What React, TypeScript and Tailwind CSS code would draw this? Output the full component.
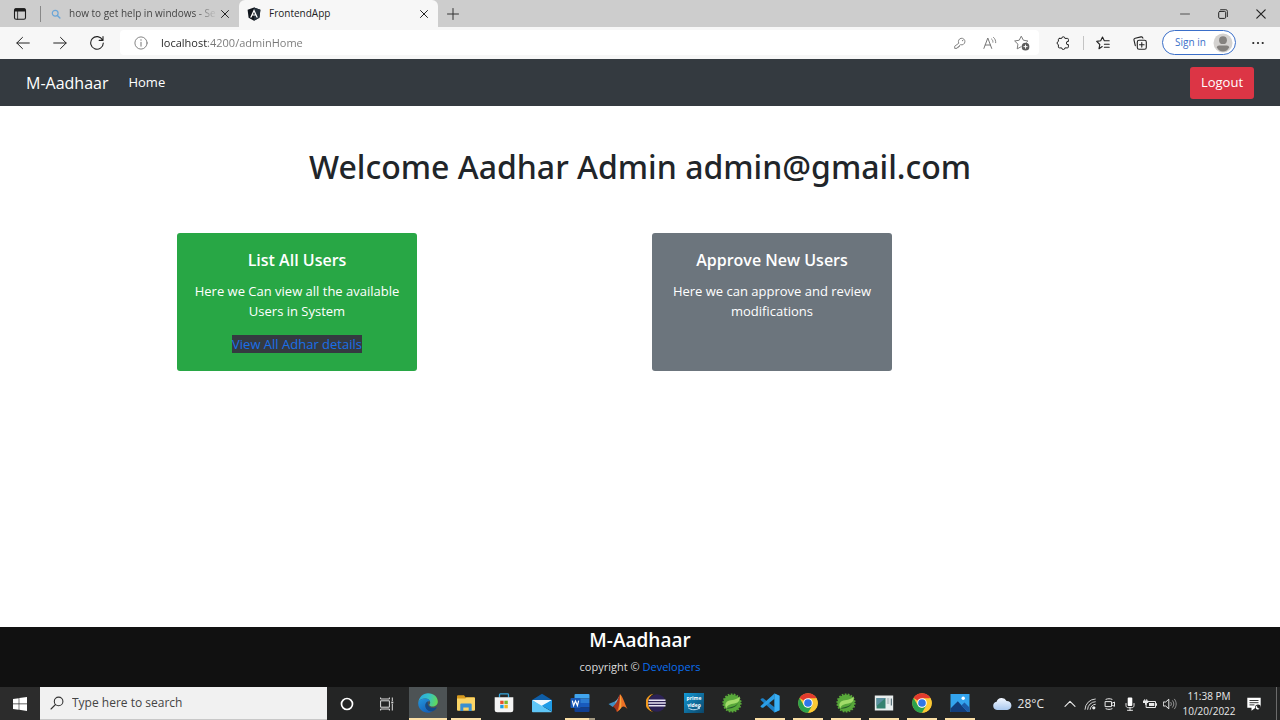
import type { ReactNode } from "react";

type IconProps = { className?: string };

const line = {
  fill: "none",
  stroke: "currentColor",
  strokeLinecap: "round" as const,
  strokeLinejoin: "round" as const,
};

function TabActionsIcon() {
  return (
    <svg viewBox="0 0 14 14" className="size-3.5">
      <rect x="1.5" y="1.7" width="11" height="10.6" rx="1.6" {...line} strokeWidth="1.1" />
      <path d="M1.5 2.6a1.4 1.4 0 0 1 1.4-1.3h8.2a1.4 1.4 0 0 1 1.4 1.3v1.8h-11z" fill="currentColor" />
      <path d="M4.6 4.4v7.8" {...line} strokeWidth="0.8" />
    </svg>
  );
}

function SearchIcon({ className }: IconProps) {
  return (
    <svg viewBox="0 0 14 14" className={className}>
      <circle cx="8.6" cy="5.4" r="4.3" {...line} strokeWidth="1.1" />
      <path d="M5.5 8.5 1 13" {...line} strokeWidth="1.1" />
    </svg>
  );
}

function TabSearchIcon() {
  return (
    <svg viewBox="0 0 10 10" className="size-2.5 shrink-0 text-[#69a5d8]">
      <circle cx="4.2" cy="4.2" r="2.9" {...line} strokeWidth="1.2" />
      <path d="m6.400 6.400 2.500 2.600" {...line} strokeWidth="1.4" />
    </svg>
  );
}

function CloseIcon({ className }: IconProps) {
  return (
    <svg viewBox="0 0 10 10" className={className}>
      <path d="m1.5 1.5 7 7m0-7-7 7" {...line} strokeWidth="1" />
    </svg>
  );
}

function AngularIcon() {
  return (
    <svg viewBox="0 0 14 14" className="size-3.5">
      <path d="M7 .4 13.4 2.7l-1 8L7 13.7l-5.4-3-1-8z" fill="#10151c" />
      <path d="M7 .4v13.3l5.4-3 1-8z" fill="#25303b" />
      <path d="M7 2 3.1 10.6h1.5l.8-2h3.2l.8 2h1.5zm0 2.9 1.1 2.6H5.9z" fill="#fff" fillRule="evenodd" />
    </svg>
  );
}

function BackIcon() {
  return (
    <svg viewBox="0 0 14 14" className="size-3.5">
      <path d="M13.3 7H.9m5.6-5.6L.8 7l5.700 5.600" {...line} strokeWidth="1" />
    </svg>
  );
}

function ForwardIcon() {
  return (
    <svg viewBox="0 0 14 14" className="size-3.5">
      <path d="M.7 7h12.4M7.5 1.4 13.2 7l-5.700 5.600" {...line} strokeWidth="1" />
    </svg>
  );
}

function ReloadIcon() {
  return (
    <svg viewBox="0 0 14 14" className="size-3.5">
      <path d="M12.6 4A6.3 6.3 0 1 0 13.3 7M13 .6V4.4H9.2" {...line} strokeWidth="1.1" />
    </svg>
  );
}

function InfoIcon() {
  return (
    <svg viewBox="0 0 14 14" className="size-3.5">
      <circle cx="7" cy="7" r="6.1" {...line} strokeWidth="0.9" />
      <path d="M7 6.3v3.9" {...line} strokeWidth="1" />
      <circle cx="7" cy="4" r="0.7" fill="currentColor" />
    </svg>
  );
}

function KeyIcon() {
  return (
    <svg viewBox="0 0 12 12" className="size-3">
      <path d="M4.6 5.9a3.3 3.3 0 1 1 2 1.8L5.5 8.4v1.1H4.3v1.1H3.1l-.2.8H.7V9.6z" {...line} strokeWidth="0.9" />
      <circle cx="8.6" cy="3.6" r="0.7" fill="currentColor" />
    </svg>
  );
}

function ReadAloudIcon() {
  return (
    <svg viewBox="0 0 14 14" className="size-3.5">
      <path d="M.9 12.4 4.8 2l3.9 10.4M2.2 9h5.2" {...line} strokeWidth="1" />
      <path d="M8.6 3c1 .8 1.4 1.9 1.3 3.2M10.5 1.4c1.6 1.4 2.3 3.2 2.2 5.3" {...line} strokeWidth="0.9" />
    </svg>
  );
}

function StarPlusIcon() {
  return (
    <svg viewBox="0 0 15 15" className="size-4">
      <path d="M6.6 11 3 13l.7-4.4L.6 5.6l4.3-.7 1.9-3.8 2 3.8 4.2.7-1.3 1.3" {...line} strokeWidth="0.9" />
      <circle cx="10.8" cy="10.9" r="3.6" fill="#5c5c5c" />
      <path d="M10.8 9v3.8M8.9 10.9h3.8" stroke="#fff" strokeWidth="0.9" />
    </svg>
  );
}

function ExtensionsIcon() {
  return (
    <svg viewBox="0 0 14 14" className="size-3.5">
      <path
        d="M3.400 2.400h2.300a1.600 1.600 0 0 1 3.200 0h2.500a1 1 0 0 1 1 1v2.100a1.600 1.600 0 1 0 0 3.100v2.300a1 1 0 0 1-1 1H8.900a1.600 1.600 0 0 1-3.200 0H3.400a1 1 0 0 1-1-1V8.700a1.700 1.700 0 0 1 0-3.300v-2a1 1 0 0 1 1-1z"
        {...line}
        strokeWidth="1"
      />
    </svg>
  );
}

function FavoritesIcon() {
  return (
    <svg viewBox="0 0 14 14" className="size-3.5">
      <path d="M6.2 10.5 3 12.7l.8-4.2L.7 5.4l4-.6 1.8-3.7 1.8 3.7h4.9M8.4 8.2h4.8M8.4 11.2h4.8" {...line} strokeWidth="1.1" />
    </svg>
  );
}

function CollectionsIcon() {
  return (
    <svg viewBox="0 0 14 14" className="size-3.5">
      <rect x="4.3" y="4.3" width="9" height="9" rx="1.8" {...line} strokeWidth="1.1" />
      <path d="M8.8 6.5v4.6M6.5 8.8h4.6M2.3 9.6 1 4.1A1.6 1.6 0 0 1 2.2 2.2L8 .9a1.6 1.6 0 0 1 1.9 1.2" {...line} strokeWidth="1.1" />
    </svg>
  );
}

function AvatarIcon() {
  return (
    <svg viewBox="0 0 20 20" className="size-5">
      <circle cx="10" cy="10" r="9.5" fill="#d4d2d0" />
      <circle cx="10" cy="7.2" r="3.9" fill="#85827f" />
      <path d="M3.9 14.6c0-1.3 1-2 2.2-2h7.8c1.200 0 2.200.7 2.200 2C14.800 17 12.700 18.600 10 18.600s-4.800-1.600-6.100-4z" fill="#85827f" />
    </svg>
  );
}

function WindowsIcon() {
  return (
    <svg viewBox="0 0 14 14" className="size-3.5" fill="#fff">
      <path d="M0 2 5.700 1.200v5.400H0zM6.300 1.100 14 0v6.600H6.300zM0 7.200h5.700v5.500L0 11.900zM6.300 7.200H14v6.800l-7.700-1.200z" />
    </svg>
  );
}

function CortanaIcon() {
  return (
    <svg viewBox="0 0 14 14" className="size-3.5">
      <circle cx="7" cy="7" r="5.500" fill="none" stroke="#fff" strokeWidth="1.700" />
    </svg>
  );
}

function TaskViewIcon() {
  return (
    <svg viewBox="0 0 14 14" className="size-3.5" fill="none" stroke="#ddd" strokeWidth="1">
      <path d="M.6 3.800h8.800v6.400H.6zM.6.500v1.500h8.800V.500M.6 13.500V12h8.800v1.500M12.300.5v3.500M12.300 7v6.500" />
      <path d="M11.300 5.500h2" strokeWidth="1.800" />
    </svg>
  );
}

function EdgeIcon() {
  return (
    <svg viewBox="0 0 20 20" className="size-5">
      <defs>
        <linearGradient id="edge-top" x1="0" y1="0.300" x2="1" y2="0.500">
          <stop offset="0" stopColor="#2aa7e0" />
          <stop offset="0.500" stopColor="#35c1c8" />
          <stop offset="1" stopColor="#62d957" />
        </linearGradient>
        <linearGradient id="edge-left" x1="0" y1="0" x2="0.600" y2="1">
          <stop offset="0" stopColor="#2397dd" />
          <stop offset="1" stopColor="#1561b8" />
        </linearGradient>
      </defs>
      <path d="M.3 9.300C1 4 5 .2 10 .2c6 0 9.800 4 9.800 8.300 0 3.200-2.400 5-5.200 5-2 0-3.300-.6-3.300-1.500 0-.6.900-1 .9-2.400 0-2-1.800-4-5-4C3.800 5.600 1.300 7 .3 9.300z" fill="url(#edge-top)" />
      <path d="M.3 9.300c1-2.300 3.500-3.700 6.900-3.700 2.600 0 4.400 1.300 4.900 2.900-2.200-.8-4.700 1-4.700 3.900 0 4 3.700 6.300 7.200 5.800-1.300.9-2.900 1.500-4.600 1.500C4.300 19.700-.4 15 .3 9.300z" fill="url(#edge-left)" />
      <path d="M7.400 12.400c0-2 1-3.500 2.500-4-.9 2 .2 6.500 5.300 6.500 1.300 0 2.300-.4 3-.7.5-.2.800.1.500.6-1 1.700-2.500 2.900-4.100 3.400-3.500.5-7.200-1.800-7.200-5.800z" fill="#114a8b" />
    </svg>
  );
}

function ExplorerIcon() {
  return (
    <svg viewBox="0 0 20 18" className="h-4.5 w-5">
      <path d="M1 2.200A1 1 0 0 1 2 1.200h6l1.600 2H18a1 1 0 0 1 1 1V8H1z" fill="#d79a1e" />
      <path d="M1 4.600h8.200l1.300-1.200H18a1 1 0 0 1 1 1v11.400a1 1 0 0 1-1 1H2a1 1 0 0 1-1-1z" fill="#fbd567" />
      <path d="M4.300 17V10.600a1 1 0 0 1 1-1h9.400a1 1 0 0 1 1 1V17h-3v-3.600H7.300V17z" fill="#3a8fd0" />
    </svg>
  );
}

function StoreIcon() {
  return (
    <svg viewBox="0 0 20 20" className="size-5">
      <path d="M5.500 4.600V1.700a.8.800 0 0 1 .8-.8h7.400a.8.800 0 0 1 .8.800v2.900" fill="none" stroke="#35a5dc" strokeWidth="1.300" />
      <path d="M.7 4.200h18.600v12.600a2.500 2.500 0 0 1-2.500 2.500H3.200a2.500 2.500 0 0 1-2.500-2.500z" fill="#f4f4f4" />
      <path d="M6.200 7.700h3.400v3.400H6.200z" fill="#e8502a" />
      <path d="M10.400 7.700h3.400v3.400h-3.400z" fill="#7db928" />
      <path d="M6.200 11.900h3.400v3.400H6.200z" fill="#1f9ee0" />
      <path d="M10.400 11.900h3.400v3.400h-3.400z" fill="#f5b51b" />
    </svg>
  );
}

function MailIcon() {
  return (
    <svg viewBox="0 0 20 20" className="size-5">
      <path d="M0 7 10 .8 20 7v4H0z" fill="#0e5ea8" />
      <path d="M0 7h20L10 14.500z" fill="#f2f8fd" />
      <path d="M0 7 20 18.800a.8.800 0 0 1-.6.500H.8a.8.800 0 0 1-.8-.8z" fill="#5fc6f6" />
      <path d="M20 7v11.600L9.700 12.700z" fill="#1f9be6" />
    </svg>
  );
}

function WordIcon() {
  return (
    <svg viewBox="0 0 20 20" className="size-5">
      <path d="M5.500 1h13a1 1 0 0 1 1 1v3.500h-15V2a1 1 0 0 1 1-1z" fill="#41a5ee" />
      <path d="M4.500 5.500h15V10h-15z" fill="#2b7cd3" />
      <path d="M4.500 10h15v4.500h-15z" fill="#185abd" />
      <path d="M4.500 14.500h15V18a1 1 0 0 1-1 1h-13a1 1 0 0 1-1-1z" fill="#103f91" />
      <rect x="0.500" y="5" width="10" height="10" rx="1" fill="#1857b5" />
      <path d="m2.300 7.600 1.300 5 1.900-4.600 1.900 4.600 1.300-5" fill="none" stroke="#fff" strokeWidth="1.200" />
    </svg>
  );
}

function MatlabIcon() {
  return (
    <svg viewBox="0 0 20 20" className="size-5">
      <path d="m.5 11 5.700-2.300 2.300 2.100L4.700 14z" fill="#3f8fc4" />
      <path d="M6.200 8.700c2.300-.5 4.300-4.300 5.800-7.500L9 11.500z" fill="#6fb5d8" />
      <path d="M12 1.200c-1.700 2.300-2 6.500-4.500 9.600L4.700 14c1.800-.5 3 2.200 4 4.800 2.300-.8 3.200-3.300 4-5.800z" fill="#a5341c" />
      <path d="M12 1.200c2.300 1 4.700 9.500 7.500 14.800-2.500-2.500-4-3.300-6.300-1.300-1.600 1.500-2.600 3.500-4.500 4.100C11.500 14.500 11.700 6 12 1.200z" fill="#ee7125" />
      <path d="M12 1.200c1.200 2.500 1.600 7 1.200 13.500-.9.900-1.600 1.900-2.300 2.700C12.200 12 12 6 12 1.200z" fill="#f7a43b" />
    </svg>
  );
}

function EclipseIcon() {
  return (
    <svg viewBox="0 0 20 20" className="size-5">
      <path d="M7.500.8a9.300 9.300 0 0 0 0 18.400A10.500 10.500 0 0 1 7.500.8z" fill="#f39a1d" />
      <circle cx="11" cy="10" r="8.700" fill="#2c2255" />
      <path d="M2.600 7.200h16.900M2.300 10h17.500M2.600 12.800h16.900" stroke="#e8e4f3" strokeWidth="1.400" />
    </svg>
  );
}

function PrimeVideoIcon() {
  return (
    <svg viewBox="0 0 20 20" className="size-5">
      <defs>
        <linearGradient id="prime" x1="0" y1="0" x2="1" y2="1">
          <stop offset="0" stopColor="#1399d6" />
          <stop offset="1" stopColor="#0b4568" />
        </linearGradient>
      </defs>
      <path d="M0 0h20v20H0z" fill="url(#prime)" />
      <text x="10" y="7" textAnchor="middle" fontSize="5" fontWeight="700" fontFamily="Open Sans, sans-serif" fill="#fff">prime</text>
      <text x="10" y="14" textAnchor="middle" fontSize="5" fontWeight="700" fontFamily="Open Sans, sans-serif" fill="#fff">video</text>
      <path d="M4.300 15c3.500 2.200 7.500 2.300 11 .2m-1.700-.6 2-.2-.5 1.800" fill="none" stroke="#dff3ff" strokeWidth="0.900" />
    </svg>
  );
}

function SpringIcon() {
  return (
    <svg viewBox="0 0 20 20" className="size-5">
      <circle cx="10" cy="10" r="8.600" fill="#58a83a" stroke="#58a83a" strokeWidth="2" strokeDasharray="1.700 1.300" />
      <path d="M17.600 3.200c.5 3.500-.6 6-3.600 6.900-4 1.300-8.400.8-9.600 5.200-2.300-3.500-.6-7 3-7.800C11.500 6.600 15.600 6.500 17.600 3.200z" fill="#a2dc6a" />
      <path d="M4.400 15.600c5.300.3 10.200-1.200 12.300-6.800-1.400 3.200-4.700 4.900-8.300 5.400-1.500.2-2.800.7-4 1.400z" fill="#27592b" />
    </svg>
  );
}

function VsCodeIcon() {
  return (
    <svg viewBox="0 0 20 20" className="size-5">
      <path d="m14.500.5 5 2.300v14.400l-5 2.300L1.200 7.600l-.8-1.200 1.500-1.200 1.300.1L14.500 14.300z" fill="#1c7fc4" />
      <path d="M14.500.5v5.200L3.200 14.700l-1.300.1-1.500-1.200.8-1.200z" fill="#2c9fe6" />
      <path d="m14.500.5 5 2.300v14.400l-5 2.300z" fill="#39aff5" />
    </svg>
  );
}

function ChromeIcon() {
  return (
    <svg viewBox="0 0 20 20" className="size-5">
      <circle cx="10" cy="10" r="9.800" fill="#fcc934" />
      <path d="M10 10 1.500 5.100A9.800 9.800 0 0 1 18.500 5.100z" fill="#e33b2e" />
      <path d="M10 5.200h8.500a9.800 9.800 0 0 1-8.500 14.600L14.200 12.400z" fill="#fcc934" />
      <path d="M1.500 5.100 5.900 12.500 10 14.800 14.200 12.400 10 19.800A9.800 9.800 0 0 1 1.500 5.100z" fill="#2ba24c" />
      <circle cx="10" cy="10" r="4.800" fill="#fff" />
      <circle cx="10" cy="10" r="3.800" fill="#3076e8" />
    </svg>
  );
}

function ConsoleWindowIcon() {
  return (
    <svg viewBox="0 0 20 20" className="size-5">
      <path d="M.8 2.500h18.400v15H.8z" fill="#e9eeee" />
      <path d="M2.500 5h9v10.500h-9z" fill="#35816f" />
      <path d="M2.500 5h9l-9 8z" fill="#5b8fa0" />
      <path d="M12.800 6h2.500M12.800 8h2.500M12.800 10h2.500" stroke="#97a4aa" strokeWidth="1" />
      <path d="M16.800 5.500h1v7h-1z" fill="#3c5862" />
    </svg>
  );
}

function PhotosIcon() {
  return (
    <svg viewBox="0 0 20 20" className="size-5">
      <path d="M.5 1h19v18H.5z" fill="#33a4ee" />
      <path d="m.5 15.500 7.300-7.300 9.800 10.800H.5z" fill="#123d7b" />
      <path d="m11.500 12.300 3-2.800 5 5V19h-2z" fill="#1c5ca8" />
      <circle cx="13.200" cy="5.200" r="1.700" fill="#fff" />
    </svg>
  );
}

function CloudIcon() {
  return (
    <svg viewBox="0 0 20 14" className="h-3.5 w-5">
      <defs>
        <linearGradient id="cloud" x1="0" y1="0" x2="0" y2="1">
          <stop offset="0" stopColor="#f2f7ff" />
          <stop offset="1" stopColor="#a9c8ee" />
        </linearGradient>
      </defs>
      <path d="M5 13a4.200 4.200 0 0 1-.4-8.300A5.500 5.500 0 0 1 14.600 4 4.500 4.500 0 0 1 15.200 13z" fill="url(#cloud)" />
    </svg>
  );
}

function ChevronUpIcon() {
  return (
    <svg viewBox="0 0 12 12" className="size-3">
      <path d="m1 8.300 5-5 5 5" {...line} strokeWidth="1.100" />
    </svg>
  );
}

function NetworkIcon() {
  return (
    <svg viewBox="0 0 12 12" className="size-3">
      <path d="M1 11.300A10.500 10.500 0 0 1 11.300 1M3.600 11.300A7.800 7.800 0 0 1 11.300 3.700M6.200 11.300a5.200 5.200 0 0 1 5.100-5" {...line} strokeWidth="0.900" />
      <circle cx="9.800" cy="9.800" r="1.600" fill="currentColor" />
    </svg>
  );
}

function MeetNowIcon() {
  return (
    <svg viewBox="0 0 12 12" className="size-3">
      <path d="M1.500 3.600h6v5h-6zM7.500 5.500l3-1.500v4.300l-3-1.500M2 1.300c2-.8 4-.8 6 0M2 10.800c2 .8 4 .8 6 0" {...line} strokeWidth="1" />
    </svg>
  );
}

function MicIcon() {
  return (
    <svg viewBox="0 0 12 14" className="h-3.5 w-3">
      <rect x="3.700" y="0.500" width="4.600" height="8.500" rx="1" fill="#fff" />
      <path d="M2 6.500v2c0 1.400 1 2.200 2.200 2.200h3.600C9 10.700 10 9.900 10 8.500v-2M6 10.700v2.600M3.500 13.300h5" {...line} strokeWidth="1" />
    </svg>
  );
}

function BatteryIcon() {
  return (
    <svg viewBox="0 0 14 10" className="h-2.5 w-3.5">
      <rect x="3.500" y="2.500" width="9" height="6" {...line} strokeWidth="1" />
      <path d="M6 4h5.300v3H6zM13 4.200h1v2.600h-1zM0 1.500h1.200V.3h1v1.200h1V.3h1v1.200h1V4H3.700v1.700H2V4H0z" fill="currentColor" />
    </svg>
  );
}

function VolumeIcon() {
  return (
    <svg viewBox="0 0 14 12" className="h-3 w-3.5">
      <path d="M.7 4h2L5.800 1.200v9.600L2.700 8h-2z" {...line} strokeWidth="1" />
      <path d="M7.800 4.300c.8 1 .8 2.400 0 3.400M9.600 2.700c1.700 2 1.700 4.600 0 6.600M11.500 1.200c2.300 2.800 2.300 6.800 0 9.600" {...line} strokeWidth="0.800" opacity="0.700" />
    </svg>
  );
}

function NotificationsIcon() {
  return (
    <svg viewBox="0 0 14 14" className="size-3.5">
      <path d="M.3.700h13.400v10H8.500l-4 3v-3H.3z" fill="#fff" />
      <path d="M2.500 3.500h9M2.500 5.700h9M2.500 7.900h5" stroke="#222" strokeWidth="0.900" />
      <circle cx="11" cy="10.500" r="2.900" fill="#222" />
      <path d="M12.500 11.500a2 2 0 1 1-2.200-2.900 2 2 0 0 0 2.200 2.900z" fill="#fff" />
    </svg>
  );
}

function ToolButton({ label, className, children }: { label: string; className: string; children: ReactNode }) {
  return (
    <button type="button" aria-label={label} className={`flex h-6 shrink-0 items-center justify-center ${className}`}>
      {children}
    </button>
  );
}

function TabStrip() {
  return (
    <div className="flex h-[27px] items-center bg-[#cdcdcd] text-[10px] text-[#222]">
      <ToolButton label="Tab actions menu" className="w-10 text-[#1c1c1c]">
        <TabActionsIcon />
      </ToolButton>
      <div className="flex h-full w-[199px] items-center pr-1.5">
        <div className="h-4 w-px bg-[#888]" />
        <div className="flex min-w-0 flex-1 items-center gap-2 pl-2.5">
          <TabSearchIcon />
          <span className="flex-1 whitespace-nowrap text-[#444] mask-r-from-85%">how to get help in windows - Se</span>
        </div>
        <ToolButton label="Close tab" className="w-4">
          <CloseIcon className="size-2.5" />
        </ToolButton>
      </div>
      <div className="flex h-full w-[199px] items-center gap-2 rounded-t-md bg-[#f7f7f7] pr-1.5 pl-2">
        <AngularIcon />
        <span className="flex-1">FrontendApp</span>
        <ToolButton label="Close tab" className="w-4">
          <CloseIcon className="size-2.5" />
        </ToolButton>
      </div>
      <ToolButton label="New tab" className="w-[30px] text-[#333]">
        <svg viewBox="0 0 12 12" className="size-3">
          <path d="M6 .5v11M.5 6h11" {...line} strokeWidth="1" />
        </svg>
      </ToolButton>
      <div className="flex-1" />
      <ToolButton label="Minimize" className="w-[38px] text-[#444]">
        <svg viewBox="0 0 10 10" className="size-2.5">
          <path d="M.5 5h9" {...line} strokeWidth="0.900" />
        </svg>
      </ToolButton>
      <ToolButton label="Restore" className="w-[38px]">
        <svg viewBox="0 0 10 10" className="size-2.5">
          <rect x="0.700" y="2.400" width="7" height="7" rx="1.200" {...line} strokeWidth="1" />
          <path d="M2.600.7h5.200a1.600 1.600 0 0 1 1.600 1.600v5.300" {...line} strokeWidth="0.900" />
        </svg>
      </ToolButton>
      <ToolButton label="Close" className="w-[38px]">
        <CloseIcon className="size-3" />
      </ToolButton>
    </div>
  );
}

function Toolbar() {
  return (
    <div className="flex h-8 items-center bg-[#f7f7f7] pb-px text-[#222]">
      <div className="flex pr-[5px] pl-[5px]">
        <ToolButton label="Back" className="w-[36px]">
          <BackIcon />
        </ToolButton>
        <ToolButton label="Forward" className="w-[37px]">
          <ForwardIcon />
        </ToolButton>
        <ToolButton label="Refresh" className="w-[37px]">
          <ReloadIcon />
        </ToolButton>
      </div>
      <div className="flex h-[25px] flex-1 items-center rounded-sm bg-white text-[#777]">
        <ToolButton label="View site information" className="w-[41px]">
          <InfoIcon />
        </ToolButton>
        <input
          type="text"
          aria-label="Address"
          defaultValue="localhost:4200/adminHome"
          className="h-5 min-w-0 flex-1 bg-[linear-gradient(to_right,#222_47px,#777_47px)] bg-clip-text text-[11px] text-transparent outline-none"
        />
        <ToolButton label="Passwords" className="w-[30px]">
          <KeyIcon />
        </ToolButton>
        <ToolButton label="Read aloud" className="w-[30px]">
          <ReadAloudIcon />
        </ToolButton>
        <ToolButton label="Add to favorites" className="w-[34px]">
          <StarPlusIcon />
        </ToolButton>
      </div>
      <ToolButton label="Extensions" className="w-[44px] pl-1">
        <ExtensionsIcon />
      </ToolButton>
      <div className="h-3.5 w-px bg-[#c4c4c4]" />
      <ToolButton label="Favorites" className="w-[38px]">
        <FavoritesIcon />
      </ToolButton>
      <ToolButton label="Collections" className="w-[36px]">
        <CollectionsIcon />
      </ToolButton>
      <button
        type="button"
        className="ml-1 flex h-[25px] w-[74px] items-center justify-between rounded-full border border-[#3b6fc9] bg-white pr-0.5 pl-3 text-[10px] whitespace-nowrap text-[#3b6fc9]"
      >
        Sign in
        <AvatarIcon />
      </button>
      <ToolButton label="Settings and more" className="w-11">
        <svg viewBox="0 0 12 4" className="h-1 w-3" fill="currentColor">
          <circle cx="1.300" cy="2" r="1.100" />
          <circle cx="6" cy="2" r="1.100" />
          <circle cx="10.700" cy="2" r="1.100" />
        </svg>
      </ToolButton>
    </div>
  );
}

function Navbar() {
  return (
    <nav className="flex h-[47px] items-center bg-[#343a40] px-[26px] pt-px text-white">
      <a href="#brand" className="mr-5 text-base">
        M-Aadhaar
      </a>
      <a href="#home" className="flex-1 text-[13px]">
        Home
      </a>
      <button type="button" className="h-8 w-16 rounded-[3px] bg-[#dc3545] text-[13px]">
        Logout
      </button>
    </nav>
  );
}

function Card({ title, text, color, children }: { title: string; text: string; color: string; children?: ReactNode }) {
  return (
    <div className="px-3">
      <section className={`h-full w-60 rounded-[3px] px-4 py-[17px] text-center text-[13px] leading-5 text-white ${color}`}>
        <h2 className="mb-2.5 text-base leading-[21px] font-semibold">{title}</h2>
        <p>{text}</p>
        {children}
      </section>
    </div>
  );
}

type TaskApp = { name: string; icon: ReactNode; state: "active" | "open" | "grouped" | "closed" };

const apps: TaskApp[] = [
  { name: "Microsoft Edge", icon: <EdgeIcon />, state: "active" },
  { name: "File Explorer", icon: <ExplorerIcon />, state: "open" },
  { name: "Microsoft Store", icon: <StoreIcon />, state: "closed" },
  { name: "Mail", icon: <MailIcon />, state: "closed" },
  { name: "Word", icon: <WordIcon />, state: "grouped" },
  { name: "MATLAB", icon: <MatlabIcon />, state: "closed" },
  { name: "Eclipse", icon: <EclipseIcon />, state: "closed" },
  { name: "Prime Video", icon: <PrimeVideoIcon />, state: "closed" },
  { name: "Spring Tools", icon: <SpringIcon />, state: "closed" },
  { name: "Visual Studio Code", icon: <VsCodeIcon />, state: "open" },
  { name: "Google Chrome", icon: <ChromeIcon />, state: "open" },
  { name: "Spring Tool Suite", icon: <SpringIcon />, state: "open" },
  { name: "Console", icon: <ConsoleWindowIcon />, state: "open" },
  { name: "Google Chrome window", icon: <ChromeIcon />, state: "open" },
  { name: "Photos", icon: <PhotosIcon />, state: "open" },
];

const appBackground = { active: "bg-[#4d5355]", open: "", grouped: "", closed: "" };
const appUnderline = {
  active: "w-full bg-[#fbdfa6]",
  open: "w-[30px] bg-[#fbdfa6]",
  grouped: "w-[30px] border-r-6 border-[#a49a82] bg-[#fbdfa6]",
  closed: "w-[30px]",
};

function Taskbar() {
  return (
    <div className="flex h-[33px] items-stretch bg-[#242525] text-[#e8e8e8]">
      <button type="button" aria-label="Start" className="flex w-10 items-center justify-center bg-[#2c2c2c]">
        <WindowsIcon />
      </button>
      <label className="flex w-[287px] items-center gap-2 border-b border-[#c8c8c8] bg-[#f1f1f1] pl-2.5 text-[#333]">
        <SearchIcon className="size-3.5" />
        <input
          type="search"
          aria-label="Type here to search"
          placeholder="Type here to search"
          className="min-w-0 flex-1 text-xs text-[#333] outline-none placeholder:text-[#444]"
        />
      </label>
      <button type="button" aria-label="Cortana" className="flex w-10 items-center justify-center">
        <CortanaIcon />
      </button>
      <button type="button" aria-label="Task View" className="mr-0.5 flex w-10 items-center justify-center">
        <TaskViewIcon />
      </button>
      {apps.map((app) => (
        <button
          key={app.name}
          type="button"
          aria-label={app.name}
          className={`flex w-[38px] flex-col items-center ${appBackground[app.state]}`}
        >
          <span className="flex flex-1 items-center">{app.icon}</span>
          <span className={`h-0.5 ${appUnderline[app.state]}`} />
        </button>
      ))}
      <div className="flex-1" />
      <div className="flex items-center">
        <button type="button" className="mr-4 flex items-center gap-1.5 text-xs">
          <CloudIcon />
          28°C
        </button>
        <ToolButton label="Show hidden icons" className="w-5">
          <ChevronUpIcon />
        </ToolButton>
        <ToolButton label="Network" className="w-5">
          <NetworkIcon />
        </ToolButton>
        <ToolButton label="Meet Now" className="w-5">
          <MeetNowIcon />
        </ToolButton>
        <ToolButton label="Microphone" className="w-5">
          <MicIcon />
        </ToolButton>
        <ToolButton label="Battery" className="w-5">
          <BatteryIcon />
        </ToolButton>
        <ToolButton label="Volume" className="w-5">
          <VolumeIcon />
        </ToolButton>
        <button type="button" className="w-[58px] text-center text-[10px] leading-[15px] whitespace-nowrap">
          11:38 PM
          <br />
          10/20/2022
        </button>
        <ToolButton label="Notifications" className="w-8">
          <NotificationsIcon />
        </ToolButton>
      </div>
      <div className="mr-[3px] ml-1.5 w-px bg-[#6b6b6b]" />
    </div>
  );
}

export default function App() {
  return (
    <div className="flex min-h-screen flex-col bg-white font-['Open_Sans','Noto_Sans',sans-serif] text-[#212529]">
      <TabStrip />
      <Toolbar />
      <Navbar />
      <main className="flex-1">
        <h1 className="mt-10 text-center font-['Noto_Sans','Open_Sans',sans-serif] text-[32px] leading-[42px] font-medium">
          Welcome Aadhar Admin admin@gmail.com
        </h1>
        <div className="mx-auto mt-[45px] grid max-w-[950px] grid-cols-2">
          <Card title="List All Users" text="Here we Can view all the available Users in System" color="bg-[#28a745]">
            <p className="mt-[13px]">
              <a href="#users" className="bg-[#343a40] text-[#1a6fe8]">
                View All Adhar details
              </a>
            </p>
          </Card>
          <Card title="Approve New Users" text="Here we can approve and review modifications" color="bg-[#6c757d]" />
        </div>
      </main>
      <footer className="h-[60px] bg-[#111] text-center text-[#ddd]">
        <h3 className="text-[19px] leading-[26px] font-semibold text-white">M-Aadhaar</h3>
        <p className="mt-1 text-[11px] leading-5">
          copyright ©{" "}
          <a href="#developers" className="text-[#0b6ff0]">
            Developers
          </a>
        </p>
      </footer>
      <Taskbar />
    </div>
  );
}
